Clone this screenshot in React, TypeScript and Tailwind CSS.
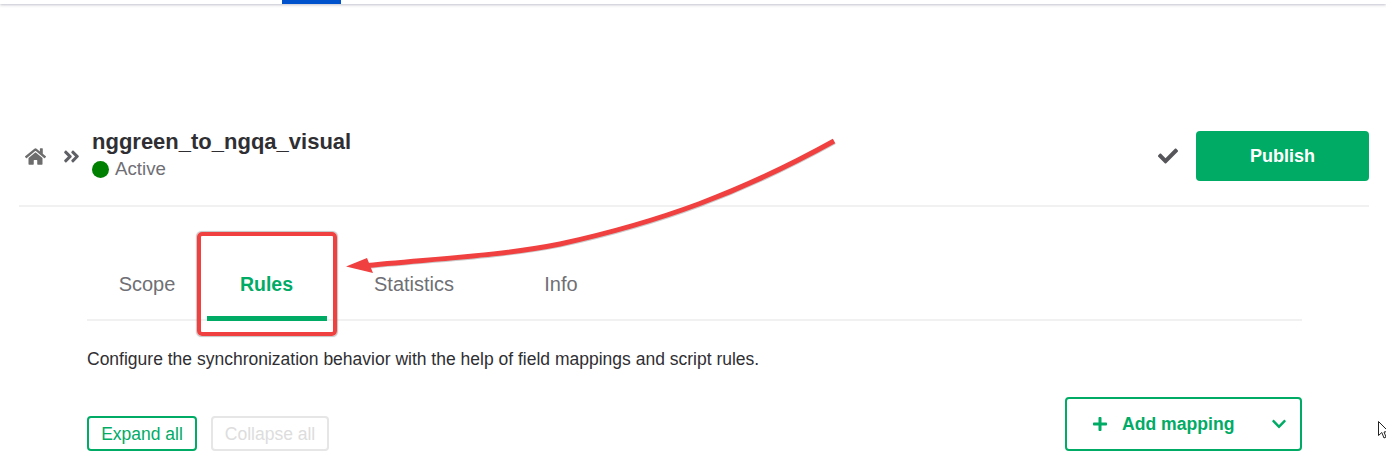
import { FaAngleDoubleRight, FaCheck, FaChevronDown, FaHome, FaPlus } from 'react-icons/fa';

const tabs = [
  { label: 'Scope', width: 'w-[120px]' },
  { label: 'Rules', width: 'w-[120px]', active: true },
  { label: 'Statistics', width: 'w-[174px]' },
  { label: 'Info', width: 'w-[120px]' },
];

export default function App() {
  return (
    <div className="relative h-[465px] w-full overflow-hidden bg-white font-['Liberation_Sans',Arial,sans-serif] text-[#2f2f33]">
      {/* Top bar */}
      <div className="h-[4px] bg-white shadow-[0_1px_3px_rgba(50,50,93,0.3)]">
        <div className="ml-[282px] h-[4px] w-[59px] bg-[#0052cc]" />
      </div>

      {/* Header */}
      <div className="ml-[19px] mr-[17px] mt-[123px] flex h-[80px] items-start justify-between border-b-2 border-[#f1f1f1]">
        <div className="flex items-center">
          <FaHome className="ml-[6px] mt-[5px] h-[21px] w-[21px] text-[#6d6d6d]" />
          <FaAngleDoubleRight className="ml-[16px] mt-[5px] h-[19px] w-[19px] text-[#5f5f66]" />
          <div className="ml-[11px]">
            <div className="text-[22px] font-bold leading-[30px]">nggreen_to_ngqa_visual</div>
            <div className="flex h-[24px] items-center">
              <span className="h-[17px] w-[17px] rounded-full bg-[#008000]" />
              <span className="ml-[6px] text-[18.7px] text-[#6f6f75]">Active</span>
            </div>
          </div>
        </div>
        <div className="mt-[4px] flex items-center">
          <FaCheck className="mr-[18px] h-[20px] w-[20px] text-[#55555a]" />
          <button className="h-[50px] w-[173px] rounded-[4px] bg-[#00ab66] text-[18px] font-bold text-white">Publish</button>
        </div>
      </div>

      {/* Content */}
      <div className="mx-[87px] w-[1215px]">
        <div className="mt-[52px] flex h-[62px] border-b-2 border-[#f1f1f1]">
          {tabs.map((tab) => (
            <div
              key={tab.label}
              className={`${tab.width} h-[62px] pt-[10px] text-center text-[20px] leading-[30px] ${
                tab.active ? 'border-b-[5px] border-[#00ab66] pr-[1px] font-bold text-[#00ab66]' : 'text-[#6f6f75]'
              }`}
            >
              {tab.active ? <span className="text-[19.5px]">{tab.label}</span> : tab.label}
            </div>
          ))}
        </div>
        <p className="mt-[26px] text-[17.5px] leading-[24px]">
          Configure the synchronization behavior with the help of field mappings and script rules.
        </p>
        <div className="mt-[26px] flex items-start justify-between">
          <div className="mt-[19px] flex gap-[14px]">
            <button className="h-[35px] w-[110px] rounded-[4px] border-2 border-[#00ab66] pt-[2px] text-[17.5px] text-[#00ab66]">Expand all</button>
            <button className="h-[35px] w-[118px] rounded-[4px] border-2 border-[#e6e6e6] pt-[2px] text-[17.5px] text-[#dddddd]">Collapse all</button>
          </div>
          <button className="flex h-[54px] w-[237px] items-center rounded-[4px] border-2 border-[#00ab66] text-[17.6px] font-bold text-[#00ab66]">
            <FaPlus className="ml-[25px] h-[16px] w-[16px]" />
            <span className="ml-[14px]">Add mapping</span>
            <FaChevronDown className="ml-[37px] h-[16px] w-[16px]" />
          </button>
        </div>
      </div>

      {/* Annotation: red box */}
      <div className="absolute left-[197px] top-[232px] h-[104px] w-[140px] rounded-[5px] border-[4px] border-[#f04040] shadow-[0_0_1px_0.5px_rgba(90,90,90,0.35)]" />

      {/* Annotation: arrow */}
      <svg className="absolute left-0 top-0" width="1386" height="465" viewBox="0 0 1386 465" fill="none">
        <path d="M834 141 C 740 193 660 222 560 244 C 500 256 430 259 362 266" stroke="#6b6b6b" strokeOpacity="0.35" strokeWidth="5" transform="translate(0.6 0.8)" />
        <path d="M834 141 C 740 193 660 222 560 244 C 500 256 430 259 362 266" stroke="#f04040" strokeWidth="5" />
        <path d="M346 266.5 L367 258 L373 273 Z" fill="#f04040" />
      </svg>

      {/* Mouse pointer */}
      <svg className="absolute left-[1378px] top-[421px]" width="10" height="20" viewBox="0 0 10 20" fill="#fff" stroke="#222" strokeWidth="1">
        <path d="M0.5 0.5 V14.5 L3.8 11.5 L6 17 L8 16 L6 11 L10.5 10.5 Z" />
      </svg>
    </div>
  );
}
